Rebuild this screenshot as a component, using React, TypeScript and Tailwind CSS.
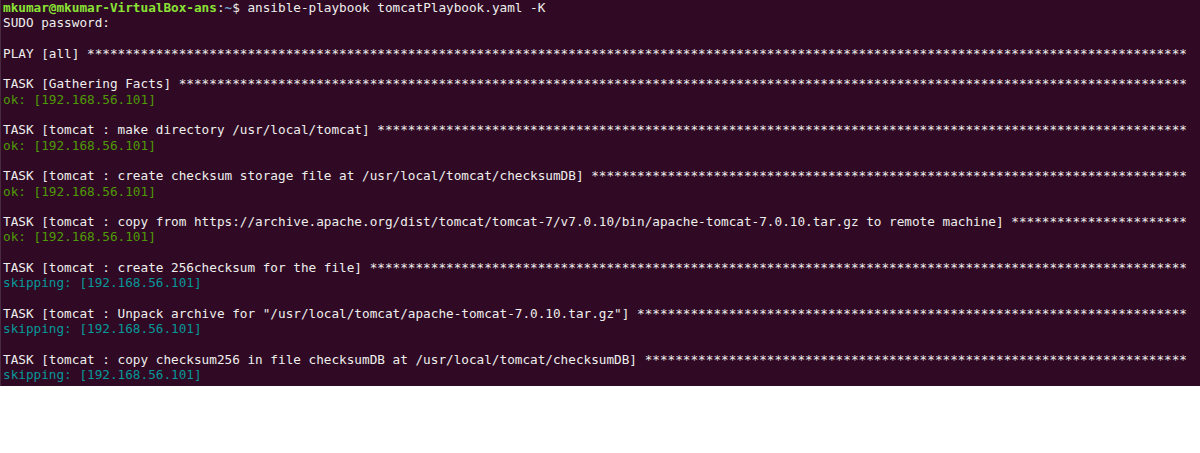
import React from "react";

const COLS = 155;

function banner(msg: string) {
  const n = Math.max(3, COLS - msg.length - 1);
  return msg + " " + "*".repeat(n);
}

type Line = { kind: "text" | "ok" | "skip" | "blank"; text?: string };

const lines: Line[] = [
  { kind: "text", text: "SUDO password:" },
  { kind: "blank" },
  { kind: "text", text: banner("PLAY [all]") },
  { kind: "blank" },
  { kind: "text", text: banner("TASK [Gathering Facts]") },
  { kind: "ok" },
  { kind: "blank" },
  { kind: "text", text: banner("TASK [tomcat : make directory /usr/local/tomcat]") },
  { kind: "ok" },
  { kind: "blank" },
  { kind: "text", text: banner("TASK [tomcat : create checksum storage file at /usr/local/tomcat/checksumDB]") },
  { kind: "ok" },
  { kind: "blank" },
  {
    kind: "text",
    text: banner(
      "TASK [tomcat : copy from https://archive.apache.org/dist/tomcat/tomcat-7/v7.0.10/bin/apache-tomcat-7.0.10.tar.gz to remote machine]"
    ),
  },
  { kind: "ok" },
  { kind: "blank" },
  { kind: "text", text: banner("TASK [tomcat : create 256checksum for the file]") },
  { kind: "skip" },
  { kind: "blank" },
  { kind: "text", text: banner('TASK [tomcat : Unpack archive for "/usr/local/tomcat/apache-tomcat-7.0.10.tar.gz"]') },
  { kind: "skip" },
  { kind: "blank" },
  { kind: "text", text: banner("TASK [tomcat : copy checksum256 in file checksumDB at /usr/local/tomcat/checksumDB]") },
  { kind: "skip" },
];

export default function App() {
  return (
    <div className="w-[1200px] h-[453px] bg-white">
      <div
        className="h-[386px] bg-[#300a24] pl-[2px] text-[12.7px] leading-[15.3px] text-[#eeeeec] whitespace-pre overflow-hidden border-l border-[#4a2a40]"
        style={{ fontFamily: '"DejaVu Sans Mono", "Liberation Mono", monospace' }}
      >
        <div>
          <span className="text-[#8ae234] font-bold">mkumar@mkumar-VirtualBox-ans</span>
          <span>:</span>
          <span className="text-[#729fcf] font-bold">~</span>
          <span>$ ansible-playbook tomcatPlaybook.yaml -K</span>
        </div>
        {lines.map((l, i) => {
          if (l.kind === "blank") return <div key={i}>&nbsp;</div>;
          if (l.kind === "ok")
            return (
              <div key={i} className="text-[#4e9a06]">
                ok: [192.168.56.101]
              </div>
            );
          if (l.kind === "skip")
            return (
              <div key={i} className="text-[#06989a]">
                skipping: [192.168.56.101]
              </div>
            );
          return <div key={i}>{l.text}</div>;
        })}
      </div>
    </div>
  );
}
